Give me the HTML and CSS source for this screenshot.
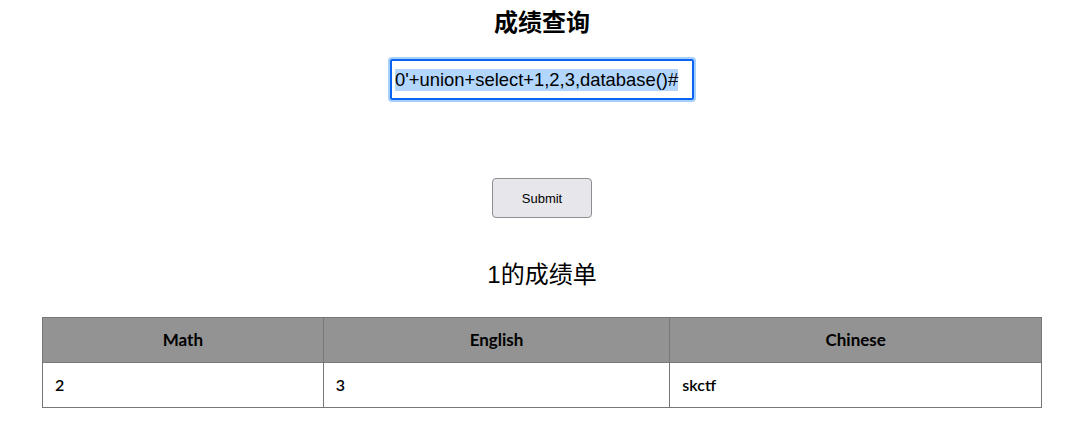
FILE: index.html
```html
<!DOCTYPE html>
<html lang="zh">
<head>
<meta charset="utf-8">
<title>成绩查询</title>
<link rel="stylesheet" href="styles.css">
</head>
<body>
<div class="page">
  <h2 class="title">成绩查询</h2>
  <form class="query">
    <div class="field"><span class="sel">0'+union+select+1,2,3,database()#</span></div>
    <button type="button" class="submit">Submit</button>
  </form>
  <h3 class="subtitle">1的成绩单</h3>
  <table class="grades">
    <colgroup>
      <col class="c1"><col class="c2"><col class="c3">
    </colgroup>
    <thead>
      <tr><th>Math</th><th>English</th><th>Chinese</th></tr>
    </thead>
    <tbody>
      <tr><td>2</td><td>3</td><td>skctf</td></tr>
    </tbody>
  </table>
</div>
</body>
</html>
```
FILE: styles.css
```css
html, body {
  margin: 0;
  padding: 0;
  background: #fff;
  color: #000;
}
body {
  font-family: "Liberation Sans", "Noto Sans CJK SC", sans-serif;
}
.page {
  width: 1000px;
  margin-left: 42px;
  display: flex;
  flex-direction: column;
  align-items: center;
  padding-top: 9px;
}
.title {
  margin: 0;
  font-size: 24px;
  line-height: 28px;
  font-weight: bold;
}
.query {
  display: flex;
  flex-direction: column;
  align-items: center;
}
.field {
  margin-top: 22px;
  width: 297px;
  height: 37px;
  border: 2px solid #0a64f0;
  border-radius: 2px;
  box-shadow: 0 0 0 2px #a6cffb;
  display: flex;
  align-items: center;
  padding-left: 3px;
  box-sizing: content-box;
  font-size: 18.4px;
}
.sel {
  background: #b2d6fd;
  line-height: 22px;
  white-space: nowrap;
}
.submit {
  margin-top: 78px;
  width: 100px;
  height: 40px;
  background: #e6e6eb;
  border: 1px solid #8d8d92;
  border-radius: 4px;
  font-family: "Liberation Sans", sans-serif;
  font-size: 13px;
  color: #000;
  padding: 0;
}
.subtitle {
  margin: 43px 0 0;
  font-size: 24px;
  line-height: 28px;
  font-weight: normal;
}
.grades {
  margin-top: 28px;
  width: 1000px;
  border-collapse: collapse;
  font-family: "Lato", "Liberation Sans", sans-serif;
  font-size: 16px;
}
.c1 { width: 281px; }
.c2 { width: 347px; }
.c3 { width: 372px; }
.grades th, .grades td {
  border: 1px solid #777;
  height: 45px;
  padding: 0 12px 1px;
  box-sizing: border-box;
}
.grades th {
  background: #939393;
  font-weight: bold;
  font-size: 17px;
  text-align: center;
}
.grades td {
  text-align: left;
  font-weight: 600;
}
```
